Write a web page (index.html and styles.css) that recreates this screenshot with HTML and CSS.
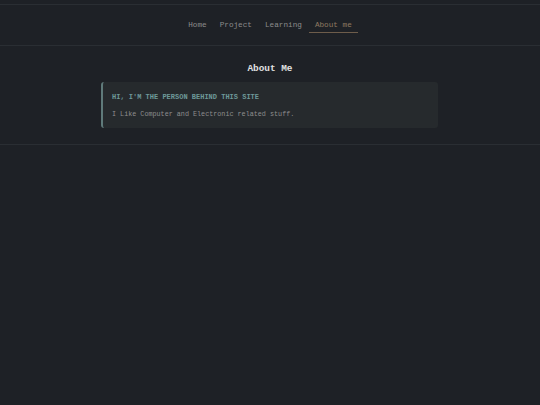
FILE: index.html
```html
<!DOCTYPE html>
<html lang="en">
<head>
<meta charset="utf-8">
<title>About Me</title>
<link rel="stylesheet" href="styles.css">
</head>
<body>
<header class="site-header">
  <nav class="nav">
    <a class="nav-link" href="#">Home</a>
    <a class="nav-link" href="#">Project</a>
    <a class="nav-link" href="#">Learning</a>
    <a class="nav-link active" href="#">About me</a>
  </nav>
</header>
<main class="content">
  <h1 class="page-title">About Me</h1>
  <section class="card">
    <h2 class="card-title">HI, I'M THE PERSON BEHIND THIS SITE</h2>
    <p class="card-text">I Like Computer and Electronic related stuff.</p>
  </section>
</main>
</body>
</html>
```
FILE: styles.css
```css
html, body {
  margin: 0;
  padding: 0;
  background: #1e2126;
  font-family: "Liberation Mono", "DejaVu Sans Mono", monospace;
}

.site-header {
  margin-top: 4px;
  height: 40px;
  border-top: 1px solid #2a2e33;
  border-bottom: 1px solid #2a2e33;
}

.nav {
  display: flex;
  justify-content: center;
  gap: 1px;
  padding-top: 10px;
}

.nav-link {
  display: block;
  font-size: 7.7px;
  line-height: 10px;
  padding: 5px 6px 2px;
  color: #8c8c8c;
  text-decoration: none;
  border-bottom: 1px solid transparent;
}

.nav-link.active {
  color: #8f7a62;
  border-bottom-color: #6e5d4b;
}

.content {
  padding: 17px 0 16px;
  border-bottom: 1px solid #2a2e33;
  display: flex;
  flex-direction: column;
  align-items: center;
}

.page-title {
  margin: 0 0 7px;
  font-size: 9.4px;
  line-height: 12px;
  font-weight: bold;
  color: #e2e2e2;
}

.card {
  width: 326px;
  margin-left: -1px;
  padding: 10px 0 9px 9px;
  background: #262a2d;
  border-left: 2px solid #5f7a7a;
  border-radius: 3px;
}

.card-title {
  margin: 0 0 7px;
  font-size: 7px;
  line-height: 10px;
  font-weight: bold;
  color: #6d9898;
}

.card-text {
  margin: 0;
  font-size: 6.75px;
  line-height: 10px;
  color: #8e8e8e;
}
```
